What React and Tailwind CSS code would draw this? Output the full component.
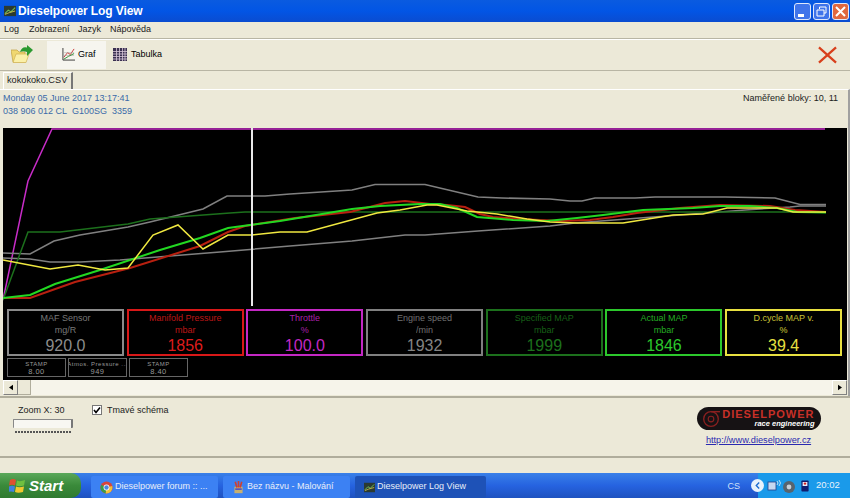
import React from 'react'

const gauges = [
  { label: 'MAF Sensor', unit: 'mg/R', value: '920.0', box: 'border-[#8a8a8a]', text: 'text-[#8c8c8c]' },
  { label: 'Manifold Pressure', unit: 'mbar', value: '1856', box: 'border-[#d81818]', text: 'text-[#dc1c1c]' },
  { label: 'Throttle', unit: '%', value: '100.0', box: 'border-[#c428c4]', text: 'text-[#c428c4]' },
  { label: 'Engine speed', unit: '/min', value: '1932', box: 'border-[#808080]', text: 'text-[#848484]' },
  { label: 'Specified MAP', unit: 'mbar', value: '1999', box: 'border-[#1c701c]', text: 'text-[#1c701c]' },
  { label: 'Actual MAP', unit: 'mbar', value: '1846', box: 'border-[#2cc82c]', text: 'text-[#2cc82c]' },
  { label: 'D.cycle MAP v.', unit: '%', value: '39.4', box: 'border-[#e8e040]', text: 'text-[#e8e040]' },
]

const stamps = [
  { label: 'STAMP', value: '8.00' },
  { label: 'Atmos. Pressure ...', value: '949' },
  { label: 'STAMP', value: '8.40' },
]

// chart traces, coordinates are page pixels minus the chart origin (3,128)
const shift = (pts) => pts.map(([x, y]) => `${x - 3},${y - 128}`).join(' ')

const traces = [
  { color: '#c82cc8', width: 1.5, pts: [[3, 300], [28, 181], [52, 129], [825, 129]] },
  { color: '#808080', width: 1.5, pts: [[3, 253], [30, 254], [54, 241], [80, 235], [128, 227], [150, 222], [203, 209], [227, 196], [265, 196], [290, 194], [352, 190], [375, 184.5], [425, 184.5], [478, 197], [502, 198], [550, 199], [570, 201], [582, 201], [595, 198], [635, 198], [655, 197], [725, 197], [775, 198], [800, 204.5], [826, 204.5]] },
  { color: '#808080', width: 1.5, pts: [[3, 258], [30, 259], [50, 262], [80, 262], [120, 260], [220, 252], [290, 246], [352, 241], [405, 235], [425, 235], [478, 231], [550, 226], [575, 223], [640, 218], [720, 212], [745, 210], [790, 207], [800, 206], [826, 206]] },
  { color: '#1c701c', width: 1.5, pts: [[3, 300], [28, 232], [60, 232], [128, 224], [150, 219], [230, 213], [245, 212], [560, 212], [720, 212], [826, 212]] },
  { color: '#b82010', width: 2, pts: [[3, 298], [30, 298], [75, 282], [130, 268], [200, 246], [228, 232], [245, 226], [295, 218], [350, 212], [385, 203], [405, 201], [430, 204], [447, 205], [465, 207], [480, 214], [493, 217], [520, 219], [560, 221], [590, 220], [613, 217], [637, 213], [680, 208], [720, 205], [770, 206], [795, 210], [826, 212]] },
  { color: '#22d822', width: 2, pts: [[3, 298], [30, 295], [55, 284], [100, 270], [160, 250], [200, 238], [228, 228], [250, 225], [280, 221], [352, 209], [380, 206], [420, 204], [440, 204], [457, 208], [477, 217], [513, 220], [547, 221], [577, 218], [603, 215], [643, 210], [693, 208], [720, 206], [750, 206], [777, 208], [797, 212], [826, 212.5]] },
  { color: '#f0e840', width: 1.5, pts: [[3, 260], [50, 269], [78, 265], [105, 270], [128, 268], [153, 235], [178, 225], [203, 249], [228, 235], [252, 235], [280, 232], [307, 232], [377, 213], [400, 210], [427, 205], [437, 205], [467, 211], [497, 214], [527, 219], [550, 222], [577, 223], [623, 223], [673, 215], [703, 214], [727, 208], [777, 208], [793, 212], [826, 212]] },
]

const AppIcon = ({ className }) => (
  <svg viewBox="0 0 14 14" className={`shrink-0 ${className}`}>
    <rect x="0" y="1" width="14" height="12" fill="#2b3a30" />
    <path d="M1 10 L5 6 L8 8 L13 3" stroke="#6fc05a" strokeWidth="1.2" fill="none" />
    <path d="M1 11 L6 9 L13 7" stroke="#d8c850" strokeWidth="1" fill="none" />
  </svg>
)

const ChromeIcon = () => (
  <svg viewBox="0 0 16 16" className="w-[13px] h-[13px] shrink-0">
    <circle cx="8" cy="8" r="7.5" fill="#d8453a" />
    <path d="M8 8 L1.5 4.5 A7.5 7.5 0 0 0 7 15.4 Z" fill="#3a9c48" />
    <path d="M8 8 L15 6 A7.5 7.5 0 0 1 7 15.4 Z" fill="#eec23c" />
    <circle cx="8" cy="8" r="3.6" fill="#fff" />
    <circle cx="8" cy="8" r="2.7" fill="#4a86e0" />
  </svg>
)

const PaintIcon = () => (
  <svg viewBox="0 0 16 16" className="w-[13px] h-[15px] shrink-0">
    <rect x="3" y="7" width="10" height="8" fill="#c8b070" />
    <path d="M4 1 L6 8 M8 0 L8 8 M12 1 L10 8" stroke="#d04030" strokeWidth="2" />
    <path d="M4 10 h8" stroke="#5050c0" strokeWidth="2" />
  </svg>
)

const TitleButton = ({ className, children }) => (
  <div className={`w-[17px] h-[17px] rounded-[3px] border border-[#dfe8fb] flex items-center justify-center ${className}`}>
    {children}
  </div>
)

const Gauge = ({ label, unit, value, box, text }) => (
  <div className={`w-[117px] h-[47px] border-2 flex flex-col items-center ${box} ${text}`}>
    <div className="text-[9px] leading-[12px] mt-[1px] whitespace-nowrap opacity-85">{label}</div>
    <div className="text-[9px] leading-[12px] opacity-85">{unit}</div>
    <div className="text-[16px] leading-[17px] mt-[1px]">{value}</div>
  </div>
)

const Stamp = ({ label, value }) => (
  <div className="w-[59px] h-[19px] border border-[#666] flex flex-col items-center text-[#999] text-[6px] leading-[8px] pt-[1px] tracking-[0.5px] whitespace-nowrap overflow-hidden">
    <div>{label}</div>
    <div className="text-[7.5px]">{value}</div>
  </div>
)

const ScrollButton = ({ dir }) => (
  <div className="w-[15px] h-[15px] bg-[#ece9d8] border border-t-white border-l-white border-r-[#808080] border-b-[#808080] flex items-center justify-center">
    <svg viewBox="0 0 5 7" className="w-[4px] h-[7px]">
      <path d={dir === 'left' ? 'M5 0 V7 L0 3.5 Z' : 'M0 0 V7 L5 3.5 Z'} fill="#000" />
    </svg>
  </div>
)

const TaskButton = ({ icon, label, active, width }) => (
  <div className={`h-[22px] rounded-[2px] flex items-center gap-[2px] pl-[9px] text-[9px] text-[#e8eef8] whitespace-nowrap ${width} ${active ? 'bg-[#1e52b7]' : 'bg-[#3c81f3]'}`}>
    {icon}
    <span>{label}</span>
  </div>
)

const App = () => {
  return (
    <div className="w-[850px] h-[498px] overflow-hidden flex flex-col bg-[#ece9d8] text-black font-['Liberation_Sans',sans-serif]">
      {/* Title bar */}
      <div className="h-[22px] shrink-0 flex items-center pl-[4px] pr-[1px] bg-gradient-to-b from-[#0a5be0] via-[#0255e5] to-[#0a4cd0]">
        <AppIcon className="w-[12px] h-[12px]" />
        <span className="ml-[2px] text-white font-bold text-[12px] tracking-[-0.1px]">Dieselpower Log View</span>
        <div className="ml-auto flex gap-[2px]">
          <TitleButton className="bg-[#3f74ea]">
            <div className="w-[6px] h-[3px] bg-white mt-[8px] mr-[3px]" />
          </TitleButton>
          <TitleButton className="bg-[#3f74ea]">
            <svg viewBox="0 0 11 11" className="w-[11px] h-[11px]">
              <path d="M3.5 3 V1 H10 V7 H8 M1 4 H8 V10 H1 Z" stroke="#fff" strokeWidth="1" fill="none" />
            </svg>
          </TitleButton>
          <TitleButton className="bg-[#e0683f]">
            <svg viewBox="0 0 11 11" className="w-[11px] h-[11px]">
              <path d="M1 1 L10 10 M10 1 L1 10" stroke="#fff" strokeWidth="2" />
            </svg>
          </TitleButton>
        </div>
      </div>

      {/* Menu */}
      <div className="h-[16px] shrink-0 flex items-center text-[9px] text-[#222] pl-[4px]">
        <span className="w-[25px]">Log</span>
        <span className="w-[49px]">Zobrazení</span>
        <span className="w-[32px]">Jazyk</span>
        <span>Nápověda</span>
      </div>

      {/* Toolbar */}
      <div className="h-[33px] shrink-0 border-y border-[#b8b5a4] shadow-[inset_0_1px_0_#fff] flex items-center pl-[11px] pr-[13px]">
        <svg viewBox="0 0 22 19" className="w-[22px] h-[19px]">
          <path d="M0 5 H6 L8 7 H14 V17 H2 Z" fill="#f0d870" stroke="#c0a040" strokeWidth="0.7" />
          <path d="M2 17.5 L5 9 H18 L15 17.5 Z" fill="#fbf0a8" stroke="#d0b050" strokeWidth="0.7" />
          <path d="M9 7 Q11 1 16 2.5 L16 0 L22 5 L16 11 L16 7 Q12 5.5 9 7 Z" fill="#2c9a30" />
        </svg>
        <div className="ml-[14px] w-[59px] h-[28px] bg-[#f6f5ef] flex items-center pl-[15px] gap-[3px] text-[9px]">
          <svg viewBox="0 0 14 14" className="w-[13px] h-[13px]">
            <path d="M1 0 V13 H14" stroke="#333" strokeWidth="1" fill="none" />
            <path d="M2 10 L6 5 L9 7 L13 1" stroke="#c83030" strokeWidth="1" fill="none" />
            <path d="M2 8 H13 M2 5 H13" stroke="#999" strokeWidth="0.5" />
            <path d="M2 12 L7 9 L13 6" stroke="#2c8a30" strokeWidth="1" fill="none" />
          </svg>
          <span>Graf</span>
        </div>
        <div className="ml-[7px] flex items-center gap-[4px] text-[9px]">
          <svg viewBox="0 0 14 13" className="w-[14px] h-[13px]">
            <rect width="14" height="13" fill="#3a3050" />
            <path d="M0 3.5 H14 M0 6 H14 M0 8.5 H14 M0 11 H14 M3.5 0 V13 M6.5 0 V13 M9.5 0 V13 M12 0 V13" stroke="#d8c8d8" strokeWidth="0.8" />
          </svg>
          <span>Tabulka</span>
        </div>
        <svg viewBox="0 0 20 18" className="ml-auto w-[19px] h-[18px]">
          <path d="M1 1 L19 17 M19 1 L1 17" stroke="#d8401c" strokeWidth="2.4" />
        </svg>
      </div>

      {/* Tabs */}
      <div className="h-[18px] shrink-0 flex items-end pl-[3px]">
        <div className="w-[70px] h-[17px] border-l border-t border-white border-r-2 border-r-[#777] flex items-center pl-[3px] text-[9.2px] text-[#222] whitespace-nowrap">
          kokokoko.CSV
        </div>
      </div>

      {/* Tab page */}
      <div className="flex-1 min-h-0 flex flex-col border-t border-white border-r-2 border-r-[#a0a0a0] pl-[3px] pr-[1px]">
        <div className="h-[38px] shrink-0 flex justify-between pt-[2px] pr-[9px] text-[9px] leading-[13px]">
          <div className="text-[#3a6aa8]">
            <div>Monday 05 June 2017 13:17:41</div>
            <div>038 906 012 CL&nbsp; G100SG&nbsp; 3359</div>
          </div>
          <div className="text-[#222]">Naměřené bloky: 10, 11</div>
        </div>

        <div className="h-[252px] shrink-0 bg-black flex flex-col">
          <svg width="844" height="178" viewBox="0 0 844 178" className="shrink-0 block">
            {traces.map((t, i) => (
              <polyline key={i} points={shift(t.pts)} fill="none" stroke={t.color} strokeWidth={t.width} />
            ))}
            <rect x="248" y="0" width="2" height="178" fill="#e8e8e8" />
          </svg>
          <div className="flex gap-[2.7px] pl-[4px] mt-[3px]">
            {gauges.map((g) => <Gauge key={g.label} {...g} />)}
          </div>
          <div className="flex gap-[2px] pl-[4px] mt-[2px]">
            {stamps.map((s, i) => <Stamp key={i} {...s} />)}
          </div>
        </div>

        <div className="h-[15px] shrink-0 flex bg-[#f6f4ea]">
          <ScrollButton dir="left" />
          <div className="w-[13px] h-[15px] bg-[#ece9d8] border-r border-b border-[#b0ad9c]" />
          <div className="flex-1" />
          <ScrollButton dir="right" />
        </div>
      </div>

      {/* Bottom panel */}
      <div className="h-[62px] shrink-0 border-y-2 border-[#b0ad9c] flex">
        <div className="w-[92px] flex flex-col pl-[13px]">
          <div className="text-[9px] leading-[12px] mt-[6px] pl-[5px] text-[#222]">Zoom X: 30</div>
          <div className="w-[60px] h-[9px] mt-[3px] bg-[#f8f7f2] border-t border-l border-[#888] border-r-2 border-r-[#777] rounded-[1px]" />
          <div className="w-[57px] h-[2px] mt-[3px] ml-[2px] bg-[repeating-linear-gradient(90deg,#555_0,#555_2px,transparent_2px,transparent_3px)]" />
        </div>
        <div className="mt-[7px] flex items-start gap-[5px]">
          <div className="w-[10px] h-[10px] bg-white border border-[#777] flex items-center justify-center">
            <svg viewBox="0 0 8 8" className="w-[8px] h-[8px]">
              <path d="M1 4 L3 6.5 L7 1.5" stroke="#000" strokeWidth="1.6" fill="none" />
            </svg>
          </div>
          <span className="text-[9px] leading-[11px] text-[#222]">Tmavé schéma</span>
        </div>
        <div className="ml-auto w-[125px] mr-[29px] mt-[9px] flex flex-col items-center">
          <div className="w-[124px] h-[23px] rounded-full bg-[#161214] flex items-center pl-[5px]">
            <svg viewBox="0 0 16 16" className="w-[18px] h-[18px] shrink-0">
              <circle cx="8" cy="8" r="6.5" stroke="#8a2020" strokeWidth="1.2" fill="none" />
              <circle cx="8" cy="8" r="2.5" stroke="#8a2020" strokeWidth="1" fill="none" />
              <path d="M8 1.5 H16" stroke="#8a2020" strokeWidth="1.2" />
            </svg>
            <div className="flex-1 flex flex-col items-end pr-[6px]">
              <span className="text-[#c83028] text-[11px] leading-[11px] font-bold tracking-[1px]">DIESELPOWER</span>
              <span className="text-white text-[7.5px] leading-[8px] font-bold italic">race engineering</span>
            </div>
          </div>
          <span className="mt-[4px] text-[9.2px] leading-[12px] text-[#2a2ab0] underline whitespace-nowrap">http://www.dieselpower.cz</span>
        </div>
      </div>

      {/* Status bar */}
      <div className="h-[15px] shrink-0" />

      {/* Taskbar */}
      <div className="h-[25px] shrink-0 flex items-end bg-gradient-to-b from-[#3a80e8] via-[#2663e0] to-[#1e52c0]">
        <div className="w-[81px] h-[25px] rounded-r-[10px] bg-gradient-to-b from-[#5aa85a] via-[#3a8a3a] to-[#2f7a30] flex items-center pl-[9px] gap-[4px]">
          <svg viewBox="0 0 16 16" className="w-[16px] h-[16px]">
            <path d="M1 2 Q4 0 7 2 L6 7.5 Q3 6 0 7.5 Z" fill="#e05030" />
            <path d="M8 2.5 Q11 4 16 2 L15 7.5 Q10 9 7 7.5 Z" fill="#70c040" />
            <path d="M0 8.5 Q3 7 6 8.5 L5 14 Q2 13 -1 14 Z" fill="#4080e0" />
            <path d="M7 8.5 Q10 10 15 8.5 L14 14 Q9 15.5 6 14 Z" fill="#f0c830" />
          </svg>
          <span className="text-white font-bold italic text-[15px] leading-none">Start</span>
        </div>
        <div className="flex gap-[5px] ml-[10px]">
          <TaskButton icon={<ChromeIcon />} label="Dieselpower forum :: ..." width="w-[127px]" />
          <TaskButton icon={<PaintIcon />} label="Bez názvu - Malování" width="w-[127px]" />
          <TaskButton icon={<AppIcon className="w-[11px] h-[11px]" />} label="Dieselpower Log View" active width="w-[131px]" />
        </div>
        <span className="ml-auto mb-[6px] text-[9px] leading-[12px] text-[#cfe0f8]">CS</span>
        <div className="ml-[11px] -mr-[6px] z-10 mb-[6px] w-[13px] h-[13px] shrink-0 rounded-full bg-[#e8f2fc] flex items-center justify-center">
          <svg viewBox="0 0 6 8" className="w-[5px] h-[7px]">
            <path d="M5 0.5 L1.5 4 L5 7.5" stroke="#1a6ad0" strokeWidth="1.6" fill="none" />
          </svg>
        </div>
        <div className="w-[92px] h-[25px] shrink-0 bg-[#1a9aea] flex items-center pl-[9px]">
          <svg viewBox="0 0 29 16" className="w-[29px] h-[16px] shrink-0">
            <rect x="1" y="4" width="8" height="8" fill="#c8d8f0" stroke="#24408a" strokeWidth="0.8" />
            <path d="M10 3 Q12 5 10 7 M12 2 Q15 5 12 8" stroke="#e8f2fc" strokeWidth="0.8" fill="none" />
            <circle cx="22" cy="9" r="6" fill="#58646e" />
            <circle cx="22" cy="9" r="2.4" fill="#c8d0d8" />
          </svg>
          <svg viewBox="0 0 10 16" className="ml-[5px] w-[8px] h-[16px] shrink-0">
            <rect x="0.5" y="1" width="9" height="14" rx="1" fill="#101c70" />
            <rect x="2" y="3" width="6" height="5" fill="#e8e8f8" />
            <circle cx="5" cy="5" r="1.5" fill="#d02020" />
          </svg>
          <span className="ml-[7px] text-[9.5px] text-[#e8f2fc]">20:02</span>
        </div>
      </div>
    </div>
  )
}

export default App
